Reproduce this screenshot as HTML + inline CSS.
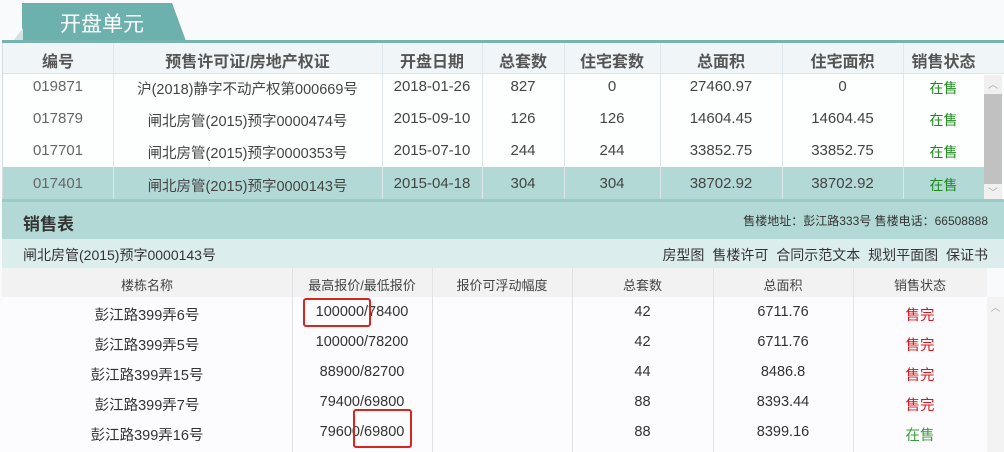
<!DOCTYPE html>
<html><head><meta charset="utf-8"><style>
*{margin:0;padding:0;box-sizing:border-box}
body{width:1004px;height:452px;background:#f8fafb;position:relative;overflow:hidden;font-family:"Liberation Sans","Noto Sans CJK SC",sans-serif;color:#333;font-size:14px}
.a{position:absolute}
.c{position:absolute;text-align:center;white-space:nowrap}
.vl{position:absolute;width:1px;background:#dde6ea}
.box{position:absolute;border:2px solid #d9261c;border-radius:3px}
</style></head><body>
<div class="a" style="left:22px;top:3px;width:164px;height:38px;background:#6cb1ae;clip-path:polygon(0 0,150px 0,164px 38px,0 38px)"></div>
<div class="a" style="left:13px;top:28px;width:10px;height:13px;background:#cfe4e3;clip-path:polygon(100% 0,100% 100%,0 100%)"></div>
<div class="c" style="left:60px;top:8px;font-size:21px;color:#fff">开盘单元</div>
<div class="a" style="left:2px;top:40px;width:1002px;height:3px;background:#78b3b1"></div>
<div class="a" style="left:2px;top:43px;width:1002px;height:157px;background:#fdfefe;border-left:1px solid #d5dde0"></div>
<div class="a" style="left:3px;top:43px;width:1001px;height:31px;background:#f0f5f8;border-bottom:1px solid #e0e6e8"></div>
<div class="a" style="left:3px;top:167px;width:981px;height:32px;background:#b3d9d7"></div>
<div class="vl" style="left:113px;top:43px;height:156px"></div>
<div class="vl" style="left:382px;top:43px;height:156px"></div>
<div class="vl" style="left:482px;top:43px;height:156px"></div>
<div class="vl" style="left:564px;top:43px;height:156px"></div>
<div class="vl" style="left:660px;top:43px;height:156px"></div>
<div class="vl" style="left:782px;top:43px;height:156px"></div>
<div class="vl" style="left:903px;top:43px;height:156px"></div>
<div class="a" style="left:984px;top:75px;width:18px;height:124px;background:#f0f0f0"></div>
<div class="a" style="left:984px;top:94px;width:18px;height:90px;background:#c1c1c1"></div>
<div class="c" style="left:984px;top:76px;width:18px;font-size:10px;color:#aaa">︿</div>
<div class="c" style="left:984px;top:184px;width:18px;font-size:10px;color:#aaa">﹀</div>
<div style="font-weight:bold;font-size:16px;color:#555">
<div class="c" style="left:3px;top:48px;width:110px">编号</div>
<div class="c" style="left:113px;top:48px;width:269px">预售许可证/房地产权证</div>
<div class="c" style="left:382px;top:48px;width:100px">开盘日期</div>
<div class="c" style="left:482px;top:48px;width:82px">总套数</div>
<div class="c" style="left:564px;top:48px;width:96px">住宅套数</div>
<div class="c" style="left:660px;top:48px;width:122px">总面积</div>
<div class="c" style="left:782px;top:48px;width:121px">住宅面积</div>
<div class="c" style="left:903px;top:48px;width:81px">销售状态</div>
</div>
<div style="font-size:15px;color:#444">
<div class="c" style="left:3px;top:78px;width:110px;color:#666">019871</div>
<div class="c" style="left:113px;top:78px;width:269px;font-size:14.5px">沪(2018)静字不动产权第000669号</div>
<div class="c" style="left:382px;top:78px;width:100px">2018-01-26</div>
<div class="c" style="left:482px;top:78px;width:82px">827</div>
<div class="c" style="left:564px;top:78px;width:96px">0</div>
<div class="c" style="left:660px;top:78px;width:122px">27460.97</div>
<div class="c" style="left:782px;top:78px;width:121px">0</div>
<div class="c" style="left:903px;top:78px;width:81px;color:#1e8a1e;font-size:14px">在售</div>

<div class="c" style="left:3px;top:110px;width:110px;color:#666">017879</div>
<div class="c" style="left:113px;top:110px;width:269px;font-size:14.5px">闸北房管(2015)预字0000474号</div>
<div class="c" style="left:382px;top:110px;width:100px">2015-09-10</div>
<div class="c" style="left:482px;top:110px;width:82px">126</div>
<div class="c" style="left:564px;top:110px;width:96px">126</div>
<div class="c" style="left:660px;top:110px;width:122px">14604.45</div>
<div class="c" style="left:782px;top:110px;width:121px">14604.45</div>
<div class="c" style="left:903px;top:110px;width:81px;color:#1e8a1e;font-size:14px">在售</div>

<div class="c" style="left:3px;top:142px;width:110px;color:#666">017701</div>
<div class="c" style="left:113px;top:142px;width:269px;font-size:14.5px">闸北房管(2015)预字0000353号</div>
<div class="c" style="left:382px;top:142px;width:100px">2015-07-10</div>
<div class="c" style="left:482px;top:142px;width:82px">244</div>
<div class="c" style="left:564px;top:142px;width:96px">244</div>
<div class="c" style="left:660px;top:142px;width:122px">33852.75</div>
<div class="c" style="left:782px;top:142px;width:121px">33852.75</div>
<div class="c" style="left:903px;top:142px;width:81px;color:#1e8a1e;font-size:14px">在售</div>

<div class="c" style="left:3px;top:175px;width:110px;color:#666">017401</div>
<div class="c" style="left:113px;top:175px;width:269px;font-size:14.5px">闸北房管(2015)预字0000143号</div>
<div class="c" style="left:382px;top:175px;width:100px">2015-04-18</div>
<div class="c" style="left:482px;top:175px;width:82px">304</div>
<div class="c" style="left:564px;top:175px;width:96px">304</div>
<div class="c" style="left:660px;top:175px;width:122px">38702.92</div>
<div class="c" style="left:782px;top:175px;width:121px">38702.92</div>
<div class="c" style="left:903px;top:175px;width:81px;color:#1e8a1e;font-size:14px">在售</div>
</div>
<div class="a" style="left:2px;top:199px;width:1002px;height:3px;background:#9ccac7"></div>
<div class="a" style="left:2px;top:202px;width:1002px;height:37px;background:#b3d9d6"></div>
<div class="a" style="left:23px;top:210px;font-size:17px;font-weight:bold;color:#333">销售表</div>
<div class="a" style="right:16px;top:212px;font-size:12px;color:#333">售楼地址：彭江路333号 售楼电话：66508888</div>
<div class="a" style="left:2px;top:239px;width:1002px;height:29px;background:#dcedee"></div>
<div class="a" style="left:23px;top:245px;font-size:14px;color:#333">闸北房管(2015)预字0000143号</div>
<div class="a" style="right:16px;top:245px;font-size:14px;color:#333;word-spacing:4px">房型图 售楼许可 合同示范文本 规划平面图 保证书</div>
<div class="a" style="left:2px;top:268px;width:985px;height:29px;background:#f2f2f2"></div>
<div class="a" style="left:2px;top:297px;width:985px;height:155px;background:#fcfcfe"></div>
<div class="vl" style="left:292px;top:268px;height:184px;background:#e2e2e2"></div>
<div class="vl" style="left:432px;top:268px;height:184px;background:#e2e2e2"></div>
<div class="vl" style="left:572px;top:268px;height:184px;background:#e2e2e2"></div>
<div class="vl" style="left:713px;top:268px;height:184px;background:#e2e2e2"></div>
<div class="vl" style="left:853px;top:268px;height:184px;background:#e2e2e2"></div>
<div class="a" style="left:987px;top:297px;width:17px;height:155px;background:#f3f3f3"></div>
<div class="c" style="left:987px;top:299px;width:17px;font-size:10px;color:#aaa">︿</div>
<div style="font-size:13px;color:#444">
<div class="c" style="left:2px;top:275px;width:290px">楼栋名称</div>
<div class="c" style="left:292px;top:275px;width:140px">最高报价/最低报价</div>
<div class="c" style="left:432px;top:275px;width:140px">报价可浮动幅度</div>
<div class="c" style="left:572px;top:275px;width:141px">总套数</div>
<div class="c" style="left:713px;top:275px;width:140px">总面积</div>
<div class="c" style="left:853px;top:275px;width:134px">销售状态</div>
</div>
<div style="font-size:14.5px;color:#333">
<div class="c" style="left:2px;top:304px;width:290px">彭江路399弄6号</div>
<div class="c" style="left:292px;top:304px;width:140px">100000/78400</div>
<div class="c" style="left:572px;top:304px;width:141px">42</div>
<div class="c" style="left:713px;top:304px;width:140px">6711.76</div>
<div class="c" style="left:853px;top:304px;width:134px;color:#d4161c">售完</div>

<div class="c" style="left:2px;top:334px;width:290px">彭江路399弄5号</div>
<div class="c" style="left:292px;top:334px;width:140px">100000/78200</div>
<div class="c" style="left:572px;top:334px;width:141px">42</div>
<div class="c" style="left:713px;top:334px;width:140px">6711.76</div>
<div class="c" style="left:853px;top:334px;width:134px;color:#d4161c">售完</div>

<div class="c" style="left:2px;top:364px;width:290px">彭江路399弄15号</div>
<div class="c" style="left:292px;top:364px;width:140px">88900/82700</div>
<div class="c" style="left:572px;top:364px;width:141px">44</div>
<div class="c" style="left:713px;top:364px;width:140px">8486.8</div>
<div class="c" style="left:853px;top:364px;width:134px;color:#d4161c">售完</div>

<div class="c" style="left:2px;top:394px;width:290px">彭江路399弄7号</div>
<div class="c" style="left:292px;top:394px;width:140px">79400/69800</div>
<div class="c" style="left:572px;top:394px;width:141px">88</div>
<div class="c" style="left:713px;top:394px;width:140px">8393.44</div>
<div class="c" style="left:853px;top:394px;width:134px;color:#d4161c">售完</div>

<div class="c" style="left:2px;top:424px;width:290px">彭江路399弄16号</div>
<div class="c" style="left:292px;top:424px;width:140px">79600/69800</div>
<div class="c" style="left:572px;top:424px;width:141px">88</div>
<div class="c" style="left:713px;top:424px;width:140px">8399.16</div>
<div class="c" style="left:853px;top:424px;width:134px;color:#3a9a3a">在售</div>
</div>
<div class="box" style="left:303px;top:298px;width:68px;height:29px"></div>
<div class="box" style="left:353px;top:409px;width:59px;height:39px"></div>
</body></html>
